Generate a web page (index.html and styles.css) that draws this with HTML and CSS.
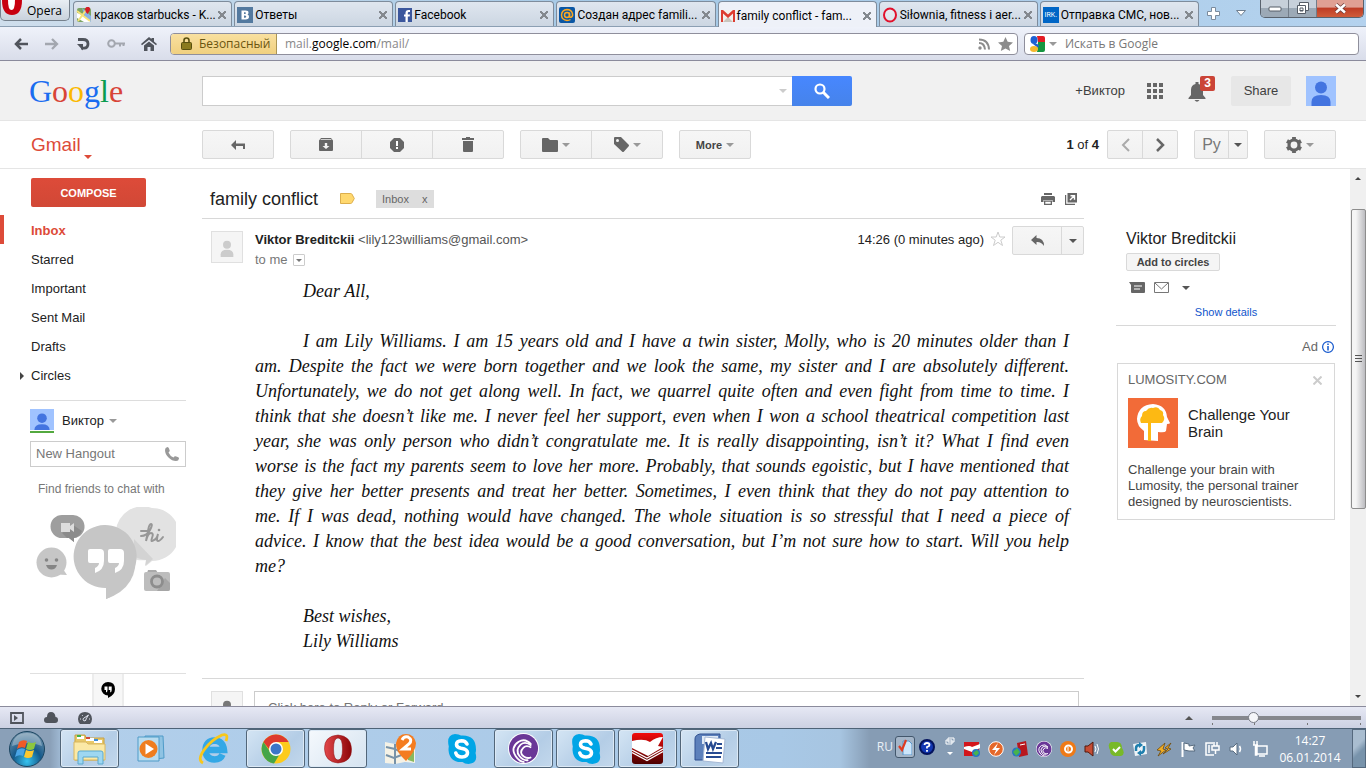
FILE: index.html
```html
<!DOCTYPE html>
<html lang="en">
<head>
  <meta charset="UTF-8">
  <title>family conflict - Gmail</title>
  <meta name="viewport" content="width=device-width, initial-scale=1.0">
  <link rel="stylesheet" href="styles.css">
</head>
<body>
  <!-- shared shapes -->
  <svg class="defs" width="0" height="0">
    <defs>
      <symbol id="person" viewBox="0 0 30 30"><circle cx="15" cy="11.500" r="6"/><path d="M5.500 30v-4q0-7 9.500-7t9.500 7v4z"/></symbol>
      <symbol id="skype" viewBox="0 0 30 30">
        <path fill="#00a5e6" d="M8 0q4 0 6 1.500 15-1 15 14 0 2-.5 3.500 3 10-7 11-4 0-6-2-13 1-14-12 0-2 .3-3.500Q-1 1 8 0z"/>
        <path fill="none" stroke="#fff" stroke-width="3.600" stroke-linecap="round" d="M20 10q-1.500-3.200-5.500-3.200-5 .2-5 3.600 0 2.800 4.500 3.800 6.500 1 6.500 4.600 0 4-5.500 4.200-5 0-6.200-4"/>
      </symbol>
      <symbol id="torrent" viewBox="0 0 32 32">
        <circle cx="16" cy="16" r="16" fill="#fff"/><circle cx="16" cy="16" r="15" fill="#6a3797"/>
        <g fill="none" stroke="#fff" stroke-width="1.900"><path d="M24 12Q18 5 11 9q-9 6-3 15 4 6 9 6"/><path d="M24 13q-6-5-11-1-6 6-1 12 4 5 9 4"/><path d="M24 15q-5-3-8 0-5 5 0 9 4 3 8 1"/></g>
      </symbol>
      <linearGradient id="redO" x1="0" x2="1"><stop offset="0" stop-color="#e2474a"/><stop offset="1" stop-color="#8d0508"/></linearGradient>
      <radialGradient id="orb" cx=".5" cy=".85" r=".8"><stop offset="0" stop-color="#35c3f0"/><stop offset=".5" stop-color="#155a8b"/><stop offset="1" stop-color="#6b8fa9"/></radialGradient>
      <linearGradient id="bookRed" x1="0" y1="0" x2="0" y2="1"><stop offset="0" stop-color="#f20c0c"/><stop offset="1" stop-color="#4c0000"/></linearGradient>
    </defs>
  </svg>

  <!-- browser tabs -->
  <header class="tabs">
    <button class="opera-menu"><svg width="20" height="15" viewBox="0 0 20 15"><path fill="#c8000f" d="M0 0h20q0 15-10 15T0 0z"/><path fill="#fff" d="M6 0h7q0 10-3.500 10T6 0z"/></svg>Opera</button>
    <nav class="tab-list">
      <div class="tab">
        <svg width="16" height="16" viewBox="0 0 16 16"><rect x="1" y="1" width="14" height="14" rx="2" fill="#7ca564"/><path d="M1 6l5 1 9 8H8L1 11z" fill="#fff"/><path d="M6 1l3 9 6 5V9z" fill="#8ab2e8"/><path d="M2 14L11 2M1 4l13 10" stroke="#f5e27a" stroke-width="2"/><path d="M11.500 7Q8 3 9.500 1T13 0q3 2-1.500 7z" fill="#d31d27"/></svg>
        <span>краков starbucks - K...</span><button class="tab-close" aria-label="Close tab"></button>
      </div>
      <div class="tab">
        <svg width="16" height="16" viewBox="0 0 16 16"><rect width="16" height="16" fill="#53799f"/><path fill="#fff" fill-rule="evenodd" d="M4.500 3.500h4q3.200 0 3 2.300 0 1.300-1 1.800 1.500.6 1.500 2.200 0 2.700-3.500 2.700h-4zM7 5.200V7q2 .3 2-.9T7 5.200zm0 3.300v2.300q2.300.2 2.300-1.100T7 8.500z"/></svg>
        <span>Ответы</span><button class="tab-close" aria-label="Close tab"></button>
      </div>
      <div class="tab">
        <svg width="14" height="14" viewBox="0 0 14 14"><rect width="14" height="14" fill="#3b579d"/><path fill="#fff" d="M7.500 14V8.500H6v-2h1.500V5q0-3 3-3H12v2h-1.200q-1 0-1 1v1.500H12l-.3 2H9.800V14z"/></svg>
        <span>Facebook</span><button class="tab-close" aria-label="Close tab"></button>
      </div>
      <div class="tab">
        <svg width="16" height="16" viewBox="0 0 16 16"><rect width="16" height="16" rx="2" fill="#0b57a4"/><g fill="none" stroke="#ffa81f" stroke-width="1.500"><circle cx="8" cy="8" r="2.500"/><path d="M10.500 5.500V9q0 1.500 1.500 1.300 2-1 1.500-3.500Q12.500 2.500 8 2.500 3 2.800 2.500 8q.3 5 5.500 5.500 2 0 3.500-1"/></g></svg>
        <span>Создан адрес famili...</span><button class="tab-close" aria-label="Close tab"></button>
      </div>
      <div class="tab active">
        <svg width="14" height="12" viewBox="0 0 14 12"><path fill="#f3efec" d="M0 0h14v12H0z"/><path fill="#c9c5bd" d="M2 12l5-5 5 5z"/><path fill="#dd3c30" d="M0 0h2l5 4.500L12 0h2v12h-2V3.500l-5 4.500-5-4.500V12H0z"/></svg>
        <span>family conflict - fam...</span><button class="tab-close" aria-label="Close tab"></button>
      </div>
      <div class="tab">
        <svg width="16" height="16" viewBox="0 0 16 16"><ellipse cx="8" cy="8" rx="6" ry="6.500" fill="#fff" fill-opacity=".3" stroke="#e1112c" stroke-width="2"/></svg>
        <span>Siłownia, fitness i aer...</span><button class="tab-close" aria-label="Close tab"></button>
      </div>
      <div class="tab">
        <i class="irk">IRK.</i>
        <span>Отправка СМС, нов...</span><button class="tab-close" aria-label="Close tab"></button>
      </div>
    </nav>
    <button class="plain new-tab" aria-label="New tab"><svg width="13" height="13" viewBox="0 0 13 13"><path d="M4.500.5h4v4h4v4h-4v4h-4v-4h-4v-4h4z" fill="#fff" stroke="#7b8b9c"/></svg></button>
    <button class="plain" aria-label="Closed tabs"><svg width="10" height="6" viewBox="0 0 10 6"><path d="M.5.500h9L5 5.500z" fill="#fff" stroke="#6f7f90"/></svg></button>
    <div class="window-buttons">
      <button aria-label="Minimize"><svg width="14" height="6" viewBox="0 0 14 6"><rect x="1" y="1" width="12" height="4" rx="1" fill="#fff" stroke="#555c66"/></svg></button>
      <button aria-label="Restore"><svg width="14" height="13" viewBox="0 0 14 13"><path fill="#fff" stroke="#555c66" d="M3.500.5h9v8h-9z"/><path fill="#fff" fill-rule="evenodd" stroke="#555c66" d="M1.500 3.500h8v8h-8zm2.500 2.500v3h3V6z"/></svg></button>
      <button class="close" aria-label="Close"><svg width="13" height="11" viewBox="0 0 13 11"><path d="M2 1.500l9 8M11 1.500l-9 8" stroke="#6d3c3a" stroke-width="4"/><path d="M2 1.500l9 8M11 1.500l-9 8" stroke="#fff" stroke-width="2.500"/></svg></button>
    </div>
  </header>

  <!-- address bar -->
  <div class="address-bar">
    <button class="plain" aria-label="Back"><svg width="14" height="12" viewBox="0 0 14 12"><path d="M7 1L2 6l5 5M2 6h12" fill="none" stroke="#50545c" stroke-width="2.500"/></svg></button>
    <button class="plain" aria-label="Forward"><svg width="14" height="12" viewBox="0 0 14 12"><path d="M7 1l5 5-5 5M12 6H0" fill="none" stroke="#a3a7af" stroke-width="2.300"/></svg></button>
    <button class="plain" aria-label="Reload"><svg width="14" height="14" viewBox="0 0 14 14"><path d="M2 2.500h5q5 0 5 4.300T8 11.200H5" fill="none" stroke="#50545c" stroke-width="2.800"/><path d="M1 7h6v6.500z" fill="#50545c"/></svg></button>
    <button class="plain" aria-label="Password"><svg width="18" height="9" viewBox="0 0 18 9"><circle cx="4.500" cy="4.500" r="3.300" fill="none" stroke="#a3a7af" stroke-width="2"/><path d="M8 4.500h10M13 4v3.500M16.500 4v3" stroke="#a3a7af" stroke-width="2"/></svg></button>
    <button class="plain" aria-label="Home"><svg width="16" height="14" viewBox="0 0 16 14"><path d="M8 0l2.500 2V1h2.500v3.500L16 7l-1 1.200-7-5.500-7 5.500L0 7zM8 4.500l5 4V14h-3.500v-4h-3v4H3V8.500z" fill="#50545c"/></svg></button>
    <div class="url-box">
      <button class="secure"><svg width="11" height="13" viewBox="0 0 11 13"><path d="M3 6V3.500Q3 1 5.500 1T8 3.500V6" fill="none" stroke="#59500f" stroke-width="1.600"/><rect x=".5" y="5.500" width="10" height="7" rx="1" fill="#8a7a1d" stroke="#59500f"/></svg>Безопасный</button>
      <div class="url">mail.<b>google.com</b>/mail/</div>
      <svg width="12" height="12" viewBox="0 0 12 12"><g fill="none" stroke="#8c8c8c" stroke-width="2"><path d="M1 5q5.500 0 6 6.500M1 1.500q9.500 0 10 10"/></g><circle cx="2" cy="10" r="1.700" fill="#8c8c8c"/></svg>
      <svg width="15" height="14" viewBox="0 0 15 14"><path d="M7.500 0l2.200 4.800 5.300.6-4 3.500 1.200 5.100-4.700-2.600L2.800 14 4 8.900 0 5.400l5.300-.6z" fill="#8c8c8c"/></svg>
    </div>
    <div class="web-search">
      <svg width="16" height="16" viewBox="0 0 16 16"><path fill="#fff" d="M0 0h16v16H0z"/><path fill="#e31b23" d="M8 0h6q2 0 2 2v4H9z"/><path fill="#159540" d="M9 6h7v8q0 2-2 2H8z"/><ellipse cx="5" cy="4" rx="3.500" ry="4" fill="#1d60d2"/><path fill="#1d60d2" d="M6 7l4 2-1 3-5-4z"/><ellipse cx="5" cy="13" rx="4" ry="3" fill="#f4b82d"/></svg>
      <i class="caret grey"></i>
      <input type="text" placeholder="Искать в Google" aria-label="Искать в Google">
    </div>
  </div>

  <div class="page">
    <!-- google bar -->
    <div class="gbar">
      <a class="logo" href="#"><span class="b">G</span><span class="r">o</span><span class="y">o</span><span class="b">g</span><span class="g">l</span><span class="r">e</span></a>
      <form class="search">
        <div class="search-field"><input type="text" aria-label="Search mail"><i class="caret light"></i></div>
        <button type="button" aria-label="Search"><svg width="16" height="16" viewBox="0 0 16 16"><circle cx="6" cy="6" r="4.500" fill="none" stroke="#fff" stroke-width="2.200"/><path d="M9 9l6 6" stroke="#fff" stroke-width="3"/></svg></button>
      </form>
      <div class="account">
        <a class="plus-name" href="#">+Виктор</a>
        <button class="plain" aria-label="Apps"><svg width="16" height="16" viewBox="0 0 16 16" fill="#666"><path d="M0 0h4v4H0zM6 0h4v4H6zM12 0h4v4h-4zM0 6h4v4H0zM6 6h4v4H6zM12 6h4v4h-4zM0 12h4v4H0zM6 12h4v4H6zM12 12h4v4h-4z"/></svg></button>
        <button class="plain bell" aria-label="Notifications"><svg width="18" height="20" viewBox="0 0 18 20" fill="#666"><path d="M7.500 0h3v2q4.500 1 4.500 6v5l2.500 3v1H.5v-1L3 13V8q0-5 4.500-6zM6.500 18h5q-2.500 3.500-5 0z"/></svg><b>3</b></button>
        <button class="share">Share</button>
        <svg class="me" width="30" height="30"><use href="#person"/></svg>
      </div>
    </div>

    <!-- gmail toolbar -->
    <div class="toolbar">
      <a class="gmail" href="#">Gmail<i class="caret red"></i></a>
      <div class="group"><button aria-label="Back to Inbox"><svg width="14" height="10" viewBox="0 0 14 10"><path d="M5 0v3.500h9V9h-2V6H5v4L0 5z" fill="#666"/></svg></button></div>
      <div class="group">
        <button aria-label="Archive"><svg width="14" height="13" viewBox="0 0 14 13"><path fill="#666" fill-rule="evenodd" d="M2 0h10l2 2.500V12q0 1-1 1H1q-1 0-1-1V2.500zm0 1.200L1.300 2h11.400l-.7-.8zM5.800 5v3H3.500L7 11l3.500-3H8.200V5z"/></svg></button>
        <button aria-label="Report spam"><svg width="14" height="14" viewBox="0 0 14 14"><path fill="#666" d="M4 0h6l4 4v6l-4 4H4l-4-4V4z"/><path fill="#fff" d="M6 3h2v5H6zM6 9h2v2H6z"/></svg></button>
        <button aria-label="Delete"><svg width="12" height="15" viewBox="0 0 12 15"><path fill="#666" d="M4 0h4v1h4v2H0V1h4zM1 4h10v10q0 1-1 1H2q-1 0-1-1z"/></svg></button>
      </div>
      <div class="group">
        <button aria-label="Move to"><svg width="16" height="14" viewBox="0 0 16 14"><path fill="#666" d="M0 1q0-1 1-1h5l2 2h7q1 0 1 1v10q0 1-1 1H1q-1 0-1-1z"/></svg><i class="caret grey"></i></button>
        <button aria-label="Labels"><svg width="15" height="15" viewBox="0 0 15 15"><path fill="#666" fill-rule="evenodd" d="M1 0h6l7.500 7.500q1 1 0 2L10 14.500q-1 1-2 0L0 7V1q0-1 1-1zm2.500 2a1.500 1.500 0 100 3 1.500 1.500 0 000-3z"/></svg><i class="caret grey"></i></button>
      </div>
      <div class="group"><button>More<i class="caret grey"></i></button></div>
      <span class="count"><b>1</b> of <b>4</b></span>
      <div class="group narrow">
        <button aria-label="Newer"><svg width="9" height="14" viewBox="0 0 9 14"><path d="M8 1L2 7l6 6" fill="none" stroke="#aaa" stroke-width="2"/></svg></button>
        <button aria-label="Older"><svg width="9" height="14" viewBox="0 0 9 14"><path d="M1 1l6 6-6 6" fill="none" stroke="#666" stroke-width="2.500"/></svg></button>
      </div>
      <div class="group lang"><button>Ру</button><button aria-label="Input tools"><i class="caret dark"></i></button></div>
      <div class="group"><button aria-label="Settings"><svg width="16" height="16" viewBox="0 0 16 16"><circle cx="8" cy="8" r="5" fill="none" stroke="#666" stroke-width="3.200"/><path d="M8 0v3M8 13v3M1 4l3 1.700M12 10.300l3 1.700M15 4l-3 1.700M4 10.300L1 12" stroke="#666" stroke-width="3.800"/></svg><i class="caret grey"></i></button></div>
    </div>

    <div class="content">
      <aside class="side">
        <div class="folders">
          <button class="compose">COMPOSE</button>
          <a class="folder current" href="#">Inbox</a>
          <a class="folder" href="#">Starred</a>
          <a class="folder" href="#">Important</a>
          <a class="folder" href="#">Sent Mail</a>
          <a class="folder" href="#">Drafts</a>
          <a class="folder expand" href="#">Circles</a>
          <a class="folder" href="#">More</a>
        </div>
        <div class="chat">
          <div class="chat-user"><svg class="me" width="24" height="24" viewBox="0 0 24 21"><use href="#person" width="24" height="24"/></svg>Виктор<i class="caret grey"></i></div>
          <div class="hangout-input"><input type="text" placeholder="New Hangout" aria-label="New Hangout"><svg width="14" height="14" viewBox="0 0 14 14"><path d="M2.500 0q1 0 1.500 1.500l.7 2Q5 4.500 3.500 5.500q1.500 3.500 5 5 1-1.500 2-1.200l2.200.7q1.500.6 1.300 1.500-.3 2.500-3 2.500Q7 14 3.500 10.500T0 3Q0 .3 2.500 0z" fill="#999"/></svg></div>
          <p>Find friends to chat with</p>
          <svg class="bubbles" width="140" height="94" viewBox="0 0 140 94">
            <path fill="#e2e2e2" d="M116 1a27 27 0 0124 14v25a27 27 0 01-24 14l-6 5 1-6A27 27 0 11116 1z"/>
            <path fill="#d3d3d3" d="M98 32l19 20-8 7 1-6q-8-1-12-4z"/>
            <path fill="#c6c6c6" d="M70 92V81A31.500 31.500 0 1184.500 77Q81 88 70 92z"/><path fill="#c6c6c6" d="M99 44q5 36-29 48V74z"/>
            <path fill="#fff" d="M54 42h10q4 0 4 4v8q0 9-9 12v-5q4-2 4-5h-9q-2 0-2-2V44q0-2 2-2zM74 42h10q4 0 4 4v8q0 9-9 12v-5q4-2 4-5h-9q-2 0-2-2V44q0-2 2-2z"/>
            <path fill="#9e9e9e" d="M26 8h10a11.500 11.500 0 012 23v4l-5-4h-7a11.500 11.500 0 010-23z"/><path fill="#8b8b8b" d="M26 26l11-8 9 6q-3 6-8 7v4l-5-4h-2z"/><path fill="#ddd" d="M25 16h9v3l4-3v9l-4-3v3h-9z"/>
            <circle cx="15.500" cy="55.500" r="15" fill="#c6c6c6"/><path d="M27 62l4 6q-6 0-10-1z" fill="#c6c6c6"/><circle cx="10.500" cy="53" r="1.800" fill="#858585"/><circle cx="20.500" cy="53" r="1.800" fill="#858585"/><path d="M10 58h11q-1.500 4.500-5.500 4.500T10 58z" fill="#858585"/>
            <path fill="#aaa" d="M112 63h8l2 3h-11z"/><rect x="108" y="65" width="26" height="19" rx="2" fill="#bdbdbd"/><path d="M121 84l8-13 5 5v6q0 2-2 2z" fill="#a6a6a6"/><circle cx="121" cy="74.500" r="5.500" fill="#bdbdbd" stroke="#8d8d8d" stroke-width="2.800"/>
            <path d="M105 29q6 0 9-6t1-6-3 7l-2 10q2-8 5-8t1 5 2 2q3-1 4-6-2 7 0 7t5-4M105 24h7" fill="none" stroke="#979797" stroke-width="2" stroke-linecap="round"/><circle cx="123" cy="23" r="1.300" fill="#979797"/>
          </svg>
          <div class="chat-tabs"><button aria-label="Hangouts"><svg width="14" height="16" viewBox="0 0 14 16"><path d="M7 16v-2.500A6.700 6.700 0 117 0q7 .2 7 7 0 6-7 9z"/><path fill="#fff" d="M3.500 4.500h3V8q0 2-1.500 2.500V8H3.500zM7.700 4.500h3V8q0 2-1.500 2.500V8H7.700z"/></svg></button></div>
        </div>
      </aside>

      <main class="mail">
        <div class="subject">
          <h1>family conflict</h1>
          <svg width="15" height="11" viewBox="0 0 15 11"><path d="M.5.500h10.300q.7 0 1.200.8L14.300 5.500 12 9.700q-.5.800-1.200.8H.5z" fill="#ffd86e" stroke="#dcae4c"/></svg>
          <span class="label">Inbox <button aria-label="Remove label">x</button></span>
          <button class="plain print" aria-label="Print all"><svg width="14" height="12" viewBox="0 0 14 12"><path fill="#666" fill-rule="evenodd" d="M3 0h8v2H3zM1 3h12l1 1v5h-2.500V7h-9v2H0V4zM3 7.500h8V12H3zm1.300 1.300v2h5.400v-2z"/></svg></button>
          <button class="plain" aria-label="In new window"><svg width="12" height="12" viewBox="0 0 12 12"><path fill="#666" d="M2.500 0H12v9.500H2.500zM0 2h1.200v8.800H10V12H0z"/><path d="M5 7l4-4M5.500 2.700h4v4" fill="none" stroke="#fff" stroke-width="1.400"/></svg></button>
        </div>
        <article class="message">
          <div class="sender-pic"><svg width="20" height="20"><use href="#person"/></svg></div>
          <div class="message-main">
            <div class="message-head">
              <div class="from">
                <div><b>Viktor Breditckii</b> <span>&lt;lily123williams@gmail.com&gt;</span></div>
                <div class="to">to me <button aria-label="Show details"><i class="caret tiny"></i></button></div>
              </div>
              <time>14:26 (0 minutes ago)</time>
              <button class="plain" aria-label="Star"><svg width="16" height="16" viewBox="0 0 16 16"><path d="M8 1l1.800 5H15l-4.200 3.200 1.700 5.300L8 11.300l-4.500 3.200 1.700-5.300L1 6h5.200z" fill="#fff" stroke="#ccc"/></svg></button>
              <div class="group reply"><button aria-label="Reply"><svg width="13" height="11" viewBox="0 0 13 11"><path d="M5.500 0v3Q13 3 13 11 10 6.500 5.500 7v3L0 5z" fill="#666"/></svg></button><button aria-label="More"><i class="caret dark"></i></button></div>
            </div>
            <div class="letter">
              <p class="short">Dear All,</p>
              <p>I am Lily Williams. I am 15 years old and I have a twin sister, Molly, who is 20 minutes older than I<br>
              am. Despite the fact we were born together and we look the same, my sister and I are absolutely different.<br>
              Unfortunately, we do not get along well. In fact, we quarrel quite often and even fight from time to time. I<br>
              think that she doesn’t like me. I never feel her support, even when I won a school theatrical competition last<br>
              year, she was only person who didn’t congratulate me. It is really disappointing, isn’t it? What I find even<br>
              worse is the fact my parents seem to love her more. Probably, that sounds egoistic, but I have mentioned that<br>
              they give her better presents and treat her better. Sometimes, I even think that they do not pay attention to<br>
              me. If I was dead, nothing would have changed. The whole situation is so stressful that I need a piece of<br>
              advice. I know that the best idea would be a good conversation, but I’m not sure how to start. Will you help<br>
              me?</p>
              <p class="short">Best wishes,</p>
              <p class="short last">Lily Williams</p>
            </div>
          </div>
        </article>
        <div class="reply-row">
          <div class="sender-pic dark"><svg width="20" height="20"><use href="#person"/></svg></div>
          <textarea placeholder="Click here to Reply or Forward" aria-label="Reply"></textarea>
        </div>
      </main>

      <aside class="people">
        <h2>Viktor Breditckii</h2>
        <button class="circles">Add to circles</button>
        <div class="contact-icons">
          <svg width="16" height="11" viewBox="0 0 16 11"><path fill="#666" d="M0 0h15q1 0 1 1v9q0 1-1 1H3q-1 0-1-1V3z"/><path d="M5 4h8M5 7h6" stroke="#fff" stroke-width="1.200"/></svg>
          <svg width="15" height="11" viewBox="0 0 15 11"><path d="M.5.500h14v10H.5zM1 1l6.500 6L14 1" fill="#fff" stroke="#777"/></svg>
          <i class="caret dark"></i>
        </div>
        <a class="details" href="#">Show details</a>
        <div class="ad-label">Ad <svg width="12" height="12" viewBox="0 0 12 12"><circle cx="6" cy="6" r="5.400" fill="none" stroke="#15c" stroke-width="1.200"/><path d="M6 2.500V4M6 5v4.500" stroke="#15c" stroke-width="1.500"/></svg></div>
        <section class="ad">
          <div class="ad-top">LUMOSITY.COM<button aria-label="Close ad"><svg width="9" height="9" viewBox="0 0 9 9"><path d="M.5.500l8 8M8.500.500l-8 8" stroke="#ccc" stroke-width="2"/></svg></button></div>
          <div class="ad-title">
            <svg width="50" height="50" viewBox="0 0 50 50"><path fill="#f26b38" d="M0 0h50v50H0z"/><path fill="#fff" d="M16 42V33Q9 28 9 21 10 7 25 6q13 1 14 13l3 6q0 1-3 1l-1 7q-1 2-8 1v9z"/><path fill="#fdb913" d="M13 25q-2-4 1-7 0-5 4-5 3-4 7-3 5-2 7 2 4 1 3 5 3 4-1 8H23v18h-3V25z"/></svg>
            <h3>Challenge Your Brain</h3>
          </div>
          <p>Challenge your brain with<br>Lumosity, the personal trainer<br>designed by neuroscientists.</p>
        </section>
      </aside>
      <div class="scrollbar"><i class="up"></i><div class="thumb"></div><i class="down"></i></div>
    </div>
  </div>

  <!-- browser status bar -->
  <footer class="status">
    <button class="plain" aria-label="Panels"><svg width="14" height="12" viewBox="0 0 14 12"><path d="M1 1h12v10H1z" fill="none" stroke="#50545c" stroke-width="1.800"/><path d="M4 3v6l4-3z" fill="#50545c"/></svg></button>
    <button class="plain" aria-label="Opera Link"><svg width="14" height="11" viewBox="0 0 14 11"><path d="M3 11q-3 0-3-3t3-3q0-5 4-5t4.500 5Q14 5 14 8t-3 3z" fill="#50545c"/></svg></button>
    <button class="plain" aria-label="Turbo"><svg width="14" height="12" viewBox="0 0 14 12"><path d="M2 12Q0 10 0 7q.5-7 7-7t7 7q0 3-2 5z" fill="#50545c"/><path d="M10.500 3L8 7a1.500 1.500 0 11-2-1zM2 7h1M4 3l.7.800M11 7h1" stroke="#dfe2ee" fill="none"/></svg></button>
    <i class="caret-up"></i>
    <input type="range" min="20" max="300" value="94" aria-label="Zoom">
  </footer>

  <!-- windows taskbar -->
  <footer class="taskbar">
    <button class="start" aria-label="Start"><svg width="36" height="36" viewBox="0 0 36 36"><circle cx="18" cy="18" r="17.500" fill="url(#orb)" stroke="#1b4560"/><path fill="#fff" opacity=".3" d="M3 15Q5 2 18 2t15 13q-14-6-30 0z"/><path fill="#ef5a28" d="M10 11q4-3 8-1l-2 7q-4-2-8 1z"/><path fill="#8cc63e" d="M19 11q4 2 8 0l-2 7q-4 2-8 0z"/><path fill="#4aa5e6" d="M8 19q4-3 8-1l-2 7q-4-2-8 1z"/><path fill="#fdc82f" d="M17 19q4 2 8 0l-2 7q-4 2-8 0z"/></svg></button>
    <div class="apps">
      <button class="open" aria-label="Explorer"><svg width="34" height="32" viewBox="0 0 34 32"><path fill="#e8c868" stroke="#c6a146" d="M2 6V2h10l1 3h18v22H2z"/><path fill="#fff" d="M4 3h7v3H4zM13 5h8v3h-8zM21 7h8v3h-8z"/><path fill="#3eb34a" d="M4 2h4v2H4z"/><path fill="#d24a35" d="M13 4h4v2h-4z"/><path fill="#3d8ed8" d="M21 6h4v2h-4z"/><path fill="#fbe9a6" stroke="#d9b75f" d="M1 9h12l2 2h17v16H1z"/><path fill="#9ed7f1" stroke="#5ba9cf" d="M5 31V20q0-2 2-2h21q2 0 2 2v11h-5v-7H10v7z"/></svg></button>
      <button aria-label="Media Player"><svg width="30" height="28" viewBox="0 0 30 28"><path fill="#8fc3e3" stroke="#4f9bc8" d="M8 1h18l1 22-19 2z"/><path fill="#b9dcef" stroke="#4f9bc8" d="M1 2h21v24H1z"/><circle cx="11.500" cy="14" r="9" fill="#ef7d1e"/><path fill="#fff" d="M8.500 8.500v11l8.500-5.500z"/></svg></button>
      <button aria-label="Internet Explorer"><svg width="32" height="32" viewBox="0 0 32 32"><path fill="none" stroke="#33a8e6" stroke-width="6.500" d="M8 17h18q-1-9-9.500-9.500Q8 8 7.500 17q0 9 9 9.500 6 0 8-5"/><path fill="none" stroke="#f8c71b" stroke-width="2.800" d="M5 30q-6-3 1-13T24 2q7-2 4 6"/></svg></button>
      <button class="open" aria-label="Chrome"><svg width="30" height="30" viewBox="0 0 30 30"><circle cx="15" cy="15" r="14.500" fill="#fccb1c"/><path fill="#de3a2e" d="M2.400 8Q7 .5 15 .5T27.600 8H15v7H8z"/><path fill="#45a549" d="M2.400 8Q-1 14 2 21t11 8.500L20 18l-10 1z"/><circle cx="15" cy="15" r="7" fill="#fff"/><circle cx="15" cy="15" r="5.500" fill="#3b76c9"/></svg></button>
      <button class="open current" aria-label="Opera"><svg width="30" height="30" viewBox="0 0 30 30"><path fill-rule="evenodd" fill="url(#redO)" stroke="#8f0e10" stroke-width=".5" d="M15 1q13 1 13.500 14T15 29Q2 28 1.500 15T15 1zm0 3q-4.500 0-4.500 11T15 26t4.500-11T15 4z"/></svg></button>
      <button aria-label="2GIS"><svg width="32" height="32" viewBox="0 0 32 32"><path fill="#f5f2e6" d="M1 9l10 2 10-2 10 2v19l-10-1-10 2-10-1z"/><path d="M2 14l9 2 9 5M11 11v20M2 22l8 3 10-4" stroke="#7893a8" stroke-width="2" fill="none"/><path fill="#88b95e" d="M24 18h6v11l-6-2z"/><path fill="#f47c20" d="M22 28Q11 18 12 10q2-9 10-9t10 9q0 8-10 18z"/><path d="M18 7q2-4 6-3 5 3 1 7l-6 5h8" stroke="#fff" stroke-width="3" fill="none"/></svg></button>
      <button aria-label="Skype"><svg width="30" height="30"><use href="#skype"/></svg></button>
      <button class="open" aria-label="BitTorrent"><svg width="31" height="31"><use href="#torrent"/></svg></button>
      <button class="open" aria-label="Skype"><svg width="30" height="30"><use href="#skype"/></svg></button>
      <button class="open" aria-label="Reader"><svg width="31" height="31" viewBox="0 0 31 31"><rect width="31" height="31" rx="3" fill="url(#bookRed)"/><path fill="#fff" d="M0 8q12-3 18 1 6-5 13-5l-5 9 5 1-15 9L0 15z"/><path d="M0 17l15 8 16-9M0 19.500l15 8 16-9" stroke="#fff" fill="none" stroke-width="1.200"/></svg></button>
      <button class="open" aria-label="Word"><svg width="32" height="32" viewBox="0 0 32 32"><path fill="#5c80bb" stroke="#2e4f8f" d="M6 1h20v26H1V6q0-4 5-5z"/><path fill="#dfe9f6" d="M8 3h16v8H8z"/><path fill="#fff" stroke="#a5b8d5" d="M11 4l20 2-2 24-20-2z"/><path d="M12 9l2 7 3-6 2 6 3-7" stroke="#264a91" stroke-width="2.300" fill="none"/><path d="M23 11h5M22 15h6M12 20h16M12 24h15" stroke="#264a91" stroke-width="2"/></svg></button>
    </div>
    <div class="lang-bar">
      <span>RU</span>
      <button class="boxed" aria-label="Spelling"><svg width="14" height="16" viewBox="0 0 14 16"><path d="M5 2h6l3 3v11H5z" fill="#cde6fb" stroke="#5795cb"/><path d="M1 7l3 4 4-10" stroke="#dd3b22" stroke-width="2.200" fill="none"/></svg></button>
      <button class="plain" aria-label="Help"><svg width="16" height="16" viewBox="0 0 16 16"><circle cx="8" cy="8" r="7" fill="#1137b4" stroke="#04135c" stroke-width="2"/><path d="M5.500 6q0-2 2.500-2t2.500 2q0 1.300-2.500 2v1.500M8 11v1.800" stroke="#fff" stroke-width="1.800" fill="none"/></svg></button>
      <svg width="10" height="20" viewBox="0 0 10 20"><path d="M3 1h6v4H3zM1 3h6v4H1z" fill="#8a9fb7" stroke="#fff"/><path d="M2 15h6l-3 3z" fill="#fff"/></svg>
    </div>
    <div class="tray">
      <svg width="16" height="16" viewBox="0 0 16 16"><path fill="#d3151b" d="M0 1h15v14H0z"/><path fill="#fff" d="M0 6q6-2 8 0l8-3v4l-8 4-8-3z"/><circle cx="12" cy="12" r="4" fill="#2775c4"/><path d="M9 12l4-3 2 3-3 3z" fill="#47b34c"/></svg>
      <svg width="16" height="16" viewBox="0 0 16 16"><circle cx="8" cy="8" r="7.300" fill="#e5682a" stroke="#fff"/><path fill="#fff" d="M10 2L4 9h4l-2 5 6-7H8z"/></svg>
      <svg width="16" height="16" viewBox="0 0 16 16"><path fill="#b8161d" d="M5 2l9-2 2 14-9 2z"/><path d="M8 4l5-1" stroke="#fff"/><circle cx="4.500" cy="11" r="4.500" fill="#2775c4"/><path d="M1 11l4-4 3 4-4 4z" fill="#47b34c"/></svg>
      <svg width="16" height="16"><use href="#torrent"/></svg>
      <svg width="16" height="16" viewBox="0 0 16 16"><circle cx="8" cy="8" r="8" fill="#ef7a17"/><circle cx="8.500" cy="8" r="3.500" fill="none" stroke="#fff" stroke-width="2"/><path d="M8 6v4" stroke="#fff"/></svg>
      <svg width="16" height="16" viewBox="0 0 16 16"><path fill="#c64c34" stroke="#53190d" d="M1 5h3l5-4v14l-5-4H1z"/><path d="M11 5q2 3 0 6M13 3q3 5 0 10" stroke="#fff" fill="none"/></svg>
      <svg width="16" height="16" viewBox="0 0 16 16"><path fill="#78b928" d="M3 1h6q5 0 5 6 4 6-1 8H8Q2 15 2 9-1 3 3 1z"/><path d="M5 8l2.500 2.500L12 6" stroke="#fff" stroke-width="2" fill="none"/></svg>
      <svg width="16" height="16" viewBox="0 0 16 16"><path fill="#eef3f7" d="M1 3l13-2 1 12-12 2z"/><path d="M4 10V7q0-3 4-3M12 5v3q0 4-4 4" stroke="#207fae" stroke-width="2.500" fill="none"/><path d="M7 1l4 3-4 3zM9 9v6l-4-3z" fill="#207fae"/></svg>
      <svg width="16" height="16" viewBox="0 0 16 16"><path d="M9 2L1 9l4 1-3 5 8-6-3-1zM15 2L9 7l3 1-5 5 8-5-3-1z" fill="#f0ad25" stroke="#6c4a10" stroke-width=".8"/></svg>
      <svg width="16" height="16" viewBox="0 0 16 16"><path d="M2.500 1v15" stroke="#fff" stroke-width="2"/><path fill="#fff" stroke="#596c80" d="M4 2l5 1v2l6-1-2 3 2 3H9l-5-1z"/></svg>
      <svg width="16" height="16" viewBox="0 0 16 16"><path d="M9 2H2v12h8M5 4v8M10 1v4M13 1v4M8 5h7v4h-7zM11.500 9v4" stroke="#fff" stroke-width="1.500" fill="none"/></svg>
      <svg width="16" height="16" viewBox="0 0 16 16"><path fill="#fff" stroke="#596c80" d="M2 6h3l4-4v12l-4-4H2z"/><path d="M11.500 5q2 3 0 6" stroke="#fff" stroke-width="1.500" fill="none"/></svg>
      <svg width="16" height="16" viewBox="0 0 16 16"><path d="M5 5h10v8H5zM7 15h6M2 0v4M5 0v4M1 4h5M3.500 4v10h2" stroke="#fff" stroke-width="1.500" fill="none"/></svg>
    </div>
    <div class="clock">14:27<br>06.01.2014</div>
    <button class="show-desktop" aria-label="Show desktop"></button>
  </footer>
</body>
</html>
```
FILE: styles.css
```css
* { box-sizing: border-box; }
html, body {
  height: 100%;
  margin: 0;
}
body {
  display: flex;
  flex-direction: column;
  overflow: hidden;
  font: 13px/16px "Liberation Sans", Arial, sans-serif;
  color: #222;
  background: #fff;
}
button, input, textarea {
  font: inherit;
  color: inherit;
  margin: 0;
  padding: 0;
  border: 0;
  outline: 0;
}
button { cursor: pointer; }
a { color: inherit; text-decoration: none; }
svg { flex: none; display: block; }
h1, h2, h3, p { margin: 0; font-weight: normal; }
.defs { position: absolute; }
.plain {
  display: flex;
  align-items: center;
  justify-content: center;
  background: none;
}

/* small triangles */
.caret {
  flex: none;
  border: 4px solid transparent;
  border-top-color: #777;
  border-bottom: 0;
}
.caret.light { border-top-color: #ccc; }
.caret.grey { border-top-color: #999; margin-left: 4px; }
.caret.dark { border-top-color: #555; }
.caret.red { border-top-color: #dd4b39; }
.caret.tiny { border-width: 3px 3px 0; }
.caret-up {
  border: 4px solid transparent;
  border-top: 0;
  border-bottom-color: #555;
}

/* browser chrome */
.tabs, .address-bar, .status, .taskbar {
  flex: none;
  display: flex;
  align-items: center;
  font-family: "Open Sans", "Segoe UI", sans-serif;
  font-size: 12px;
}
.tabs {
  height: 27px;
  align-items: stretch;
  background: linear-gradient(90deg, #cfdeec 0, #a5c9e6 600px, #b4d2ee 100%);
  border-bottom: 1px solid #8c9fb3;
  color: #000;
}
.opera-menu {
  display: flex;
  gap: 5px;
  width: 70px;
  height: 21px;
  margin-right: 3px;
  padding-left: 1px;
  line-height: 21px;
  background: linear-gradient(#e8eef4, #c9d2dc);
  border: 1px solid #76818d;
  border-top: 0;
  border-radius: 0 0 5px 5px;
}
.tab-list {
  display: flex;
  gap: 2px;
  flex: 0 1 1126px;
  font-family: Roboto, "Segoe UI", sans-serif;
}
.tab {
  flex: 1 1 0;
  min-width: 0;
  display: flex;
  align-items: center;
  gap: 2px;
  margin-top: 1px;
  padding: 2px 5px 0 2px;
  background: linear-gradient(#dfe6ef, #ccd6e2);
  border: 1px solid #7e8c9c;
  border-bottom: 0;
  border-radius: 4px 4px 0 0;
}
.tab.active {
  background: #eef1f8;
  margin-bottom: -1px;
}
.tab span {
  flex: 1;
  white-space: nowrap;
}
.tab-close {
  flex: none;
  width: 8px;
  height: 8px;
  background: linear-gradient(45deg, transparent 40%, #84898f 40% 60%, transparent 60%), linear-gradient(-45deg, transparent 40%, #84898f 40% 60%, transparent 60%);
}
.irk {
  flex: none;
  width: 16px;
  font: 7px/16px Roboto, sans-serif;
  text-align: center;
  color: #fff;
  background: #0066c6;
}
.new-tab { width: 29px; }
.tabs > .plain:not(.new-tab) { width: 26px; }
.window-buttons {
  display: flex;
  height: 18px;
  margin-left: auto;
  margin-right: 2px;
  border: 1px solid #59626d;
  border-top: 0;
  border-radius: 0 0 5px 5px;
  overflow: hidden;
}
.window-buttons button {
  display: flex;
  align-items: center;
  justify-content: center;
  width: 28px;
  background: linear-gradient(#c7d0da 50%, #9ca9b6 50%);
  border-right: 1px solid #737d89;
}
.window-buttons .close {
  width: 46px;
  border: 0;
  background: linear-gradient(#e0a093 40%, #bf3e26 50%, #d05c3a);
}
.address-bar {
  height: 34px;
  padding: 0 7px 0 14px;
  background: linear-gradient(#eff2fa, #d9ddea);
  border-bottom: 1px solid #8b8b9c;
}
.address-bar > .plain { width: 14px; margin-right: 17px; }
.address-bar > .plain:nth-of-type(4) { width: 18px; margin-right: 16px; }
.address-bar > .plain:nth-of-type(5) { width: 16px; margin-right: 13px; }
.url-box, .web-search {
  display: flex;
  align-items: center;
  height: 22px;
  background: #fff;
  border: 1px solid #8f8f9c;
  border-radius: 4px;
}
.url-box {
  flex: 1;
  gap: 8px;
  padding-right: 4px;
}
.secure {
  display: flex;
  align-items: center;
  gap: 7px;
  width: 106px;
  height: 20px;
  padding-left: 10px;
  color: #6b5510;
  background: linear-gradient(#f9e0a0, #f0d080);
  border-right: 1px solid #ab9555;
  border-radius: 3px 0 0 3px;
}
.url { flex: 1; color: #888; }
.url b { font-weight: normal; color: #000; }
.web-search {
  width: 335px;
  margin-left: 6px;
  padding-left: 4px;
}
.web-search .caret { margin-right: 8px; }
.web-search input { flex: 1; min-width: 0; background: none; }
input::placeholder { color: #777; opacity: 1; }

/* google bar */
.page {
  flex: 1;
  min-height: 0;
  display: flex;
  flex-direction: column;
}
.gbar {
  flex: none;
  display: flex;
  align-items: center;
  height: 60px;
  padding-right: 30px;
  background: #f1f1f1;
  border-bottom: 1px solid #e5e5e5;
}
.logo {
  flex: none;
  width: 202px;
  padding-left: 29px;
  font: 32px/36px "Liberation Serif", serif;
}
.logo .b { color: #1a6cf0; }
.logo .r { color: #d84437; }
.logo .y { color: #fbb900; }
.logo .g { color: #0a9b4e; }
.search {
  flex: 0 1 650px;
  display: flex;
  height: 30px;
}
.search-field {
  flex: 1;
  display: flex;
  align-items: center;
  padding-right: 5px;
  background: #fff;
  border: 1px solid #ccc;
  border-right: 0;
}
.search-field input { flex: 1; height: 28px; padding: 0 8px; }
.search > button {
  display: flex;
  align-items: center;
  justify-content: center;
  width: 60px;
  background: linear-gradient(#4787ff, #4683ea);
  border-radius: 0 2px 2px 0;
}
.account {
  display: flex;
  align-items: center;
  margin-left: auto;
  color: #404040;
}
.plus-name { margin-right: 22px; }
.bell {
  position: relative;
  margin: 0 25px;
  padding-top: 2px;
}
.bell b {
  position: absolute;
  left: 12px;
  top: -4px;
  width: 15px;
  font-size: 12px;
  line-height: 15px;
  color: #fff;
  background: #cb4437;
  border-radius: 2px;
}
.share {
  width: 60px;
  height: 30px;
  margin-right: 15px;
  background: #e7e7e7;
  border-radius: 2px;
}
.me { background: #a0c3ff; fill: #4374e0; }

/* toolbar */
.toolbar {
  flex: none;
  display: flex;
  align-items: center;
  height: 48px;
  padding-right: 30px;
  border-bottom: 1px solid #e5e5e5;
}
.gmail {
  flex: none;
  display: flex;
  align-items: center;
  gap: 3px;
  width: 202px;
  padding-left: 31px;
  font-size: 19px;
  line-height: 24px;
  color: #dd4b39;
}
.gmail .caret { margin-top: 24px; }
.group {
  flex: none;
  display: flex;
  height: 29px;
  margin-right: 16px;
  border: 1px solid #d9d9d9;
  border-radius: 2px;
  background: linear-gradient(#f6f6f6, #f1f1f1);
}
.group button {
  display: flex;
  align-items: center;
  justify-content: center;
  width: 70px;
  background: none;
  font-size: 11px;
  font-weight: bold;
  color: #444;
}
.group button + button {
  width: 71px;
  border-left: 1px solid #d9d9d9;
}
.count { margin-left: auto; margin-right: 8px; }
.group.narrow button { width: 34px; }
.group.narrow button + button { width: 35px; }
.group.lang button {
  width: 33px;
  font-size: 16px;
  font-weight: normal;
  color: #777;
}
.group.lang button + button { width: 19px; }
.toolbar .group:last-child { margin-right: 0; }

/* three columns */
.content {
  flex: 1;
  min-height: 0;
  display: flex;
}
.side {
  flex: none;
  display: flex;
  flex-direction: column;
  width: 202px;
}
.folders {
  height: 231px;
  padding-top: 9px;
  overflow: hidden;
}
.compose {
  display: block;
  width: 115px;
  height: 29px;
  margin: 0 0 8px 31px;
  font-size: 11px;
  font-weight: bold;
  color: #fff;
  background: linear-gradient(#dd4b39, #d14836);
  border-radius: 2px;
}
.folder {
  display: block;
  height: 29px;
  padding-left: 31px;
  line-height: 31px;
}
.folder.current {
  padding-left: 27px;
  border-left: 4px solid #dd4b39;
  color: #dd4b39;
  font-weight: bold;
}
.folder.expand { padding-left: 20px; }
.folder.expand::before {
  content: "";
  display: inline-block;
  margin-right: 7px;
  border: 4px solid transparent;
  border-left-color: #444;
  border-right: 0;
}
.chat {
  flex: 1;
  display: flex;
  flex-direction: column;
  margin: 0 16px 0 30px;
  border-top: 1px solid #ddd;
}
.chat-user {
  display: flex;
  align-items: center;
  margin: 8px 0 8px;
}
.chat-user .me {
  height: 24px;
  margin-right: 8px;
  padding-bottom: 1px;
  background-clip: content-box;
  border-bottom: 2px solid #53a93f;
}
.chat-user .caret { margin-left: 5px; }
.hangout-input {
  display: flex;
  align-items: center;
  height: 26px;
  padding: 0 6px 0 5px;
  border: 1px solid #ccc;
}
.hangout-input input { flex: 1; min-width: 0; }
.chat p {
  margin: 14px 0 10px 8px;
  font-size: 12px;
  color: #777;
  white-space: nowrap;
}
.bubbles { margin-left: 6px; }
.chat-tabs {
  display: flex;
  justify-content: center;
  margin-top: auto;
  border-top: 1px solid #e0e0e0;
}
.chat-tabs button {
  display: flex;
  align-items: center;
  justify-content: center;
  width: 32px;
  height: 32px;
  background: #f7f7f7;
  border: 2px solid #ececec;
  border-width: 0 2px;
}

/* message */
.mail {
  flex: 1;
  min-width: 0;
  display: flex;
  flex-direction: column;
  overflow: hidden;
}
.subject {
  flex: none;
  display: flex;
  align-items: center;
  height: 50px;
  padding: 10px 7px 0 8px;
  border-bottom: 1px solid #d8d8d8;
}
.subject h1 {
  margin-right: 22px;
  font-size: 18px;
  line-height: 22px;
}
.label {
  height: 18px;
  margin-left: 21px;
  padding: 0 6px;
  font-size: 11px;
  line-height: 18px;
  color: #666;
  background: #ddd;
}
.label button { margin-left: 10px; background: none; }
.print { margin-left: auto; margin-right: 10px; }
.message {
  flex: none;
  display: flex;
  gap: 12px;
  height: 460px;
  padding-left: 9px;
  border-bottom: 1px solid #d8d8d8;
}
.sender-pic {
  flex: none;
  display: flex;
  align-items: center;
  justify-content: center;
  width: 32px;
  height: 32px;
  margin-top: 12px;
  background: #f5f5f5;
  border: 1px solid #e0e0e0;
  fill: #ccc;
}
.sender-pic.dark { margin-top: 0; fill: #777; }
.message-main { flex: 1; min-width: 0; }
.message-head {
  display: flex;
  align-items: flex-start;
  height: 60px;
  padding-top: 7px;
}
.from { flex: 1; padding-top: 6px; }
.from span { color: #555; }
.to {
  display: flex;
  align-items: center;
  gap: 5px;
  height: 16px;
  margin-top: 4px;
  color: #777;
}
.to button {
  display: flex;
  align-items: center;
  justify-content: center;
  width: 12px;
  height: 12px;
  background: #fff;
  border: 1px solid #ccc;
  border-radius: 1px;
}
.message-head time { padding-top: 6px; }
.message-head .plain { margin: 5px 6px 0; }
.group.reply { margin: 0; }
.group.reply button { width: 48px; }
.group.reply button + button { width: 22px; }
.letter {
  margin-right: 15px;
  font: italic 18px/25px "Monotype Corsiva", "Liberation Serif", serif;
  color: #111;
}
.letter p {
  margin: 0 0 25px;
  text-indent: 48px;
  text-align: justify;
  text-align-last: justify;
}
.letter p.short { text-align-last: left; }
.letter p.last { margin-top: -25px; }
.reply-row {
  flex: none;
  display: flex;
  gap: 11px;
  padding: 12px 5px 0 9px;
}
.reply-row textarea {
  flex: 1;
  height: 60px;
  padding: 8px 13px;
  border: 1px solid #ccc;
  resize: none;
}

/* contact and ad */
.people {
  flex: none;
  width: 266px;
  padding: 59px 14px 0 32px;
}
.people h2 {
  margin-left: 10px;
  font-size: 16px;
  line-height: 22px;
}
.circles {
  display: block;
  width: 94px;
  height: 18px;
  margin: 3px 0 0 10px;
  font-size: 11px;
  font-weight: bold;
  color: #444;
  background: #f5f5f5;
  border: 1px solid #d9d9d9;
  border-radius: 2px;
}
.contact-icons {
  display: flex;
  align-items: center;
  gap: 9px;
  margin: 11px 0 11px 13px;
}
.contact-icons .caret { margin-left: 4px; }
.details {
  display: block;
  padding-bottom: 5px;
  font-size: 11px;
  text-align: center;
  color: #15c;
  border-bottom: 1px solid #d8d8d8;
}
.ad-label {
  display: flex;
  align-items: center;
  justify-content: flex-end;
  gap: 4px;
  margin: 13px 2px 8px 0;
  color: #666;
}
.ad {
  height: 157px;
  margin: 0 1px;
  padding: 8px 10px;
  border: 1px solid #d8d8d8;
}
.ad-top {
  display: flex;
  align-items: center;
  justify-content: space-between;
  margin-right: 2px;
  color: #666;
}
.ad-top button { background: none; }
.ad-title {
  display: flex;
  align-items: center;
  gap: 10px;
  margin: 10px 0 14px;
}
.ad h3 {
  width: 110px;
  font-size: 15px;
  line-height: 17px;
}
.ad p { color: #444; white-space: nowrap; }
.scrollbar {
  flex: none;
  display: flex;
  flex-direction: column;
  align-items: center;
  width: 16px;
  padding: 8px 0;
  background: #f0f0f0;
}
.scrollbar .up, .scrollbar .down {
  border: 3px solid transparent;
  border-top: 0;
  border-bottom-color: #444;
}
.scrollbar .down {
  margin-top: auto;
  border-top: 3px solid #444;
  border-bottom: 0;
}
.thumb {
  width: 15px;
  height: 300px;
  margin-top: 29px;
  border: 1px solid #8d8d8d;
  border-radius: 2px;
  background:
    repeating-linear-gradient(#555 0 1px, transparent 1px 3px) 3px 50% / 7px 9px no-repeat,
    linear-gradient(90deg, #f5f5f5 30%, #bcbcc0);
}

/* status bar */
.status {
  height: 22px;
  padding: 0 5px 0 10px;
  background: linear-gradient(#e6e8f4, #ccd1e2);
  border-top: 1px solid #8b8b9c;
}
.status .plain { margin-right: 20px; }
.caret-up { margin-left: auto; margin-right: 19px; }
.status input {
  appearance: none;
  width: 149px;
  height: 14px;
  background:
    linear-gradient(#777, #777) 0 100% / 1px 2px no-repeat,
    linear-gradient(#777, #777) 42px 100% / 1px 2px no-repeat,
    linear-gradient(#777, #777) 95px 100% / 1px 2px no-repeat,
    linear-gradient(#777, #777) 100% 100% / 1px 2px no-repeat,
    linear-gradient(#85878d, #85878d) 0 50% / 100% 4px no-repeat;
}
.status input::-webkit-slider-thumb {
  appearance: none;
  width: 11px;
  height: 11px;
  background: #f4f5f9;
  border: 1px solid #777b85;
  border-radius: 50%;
}

/* taskbar */
.taskbar {
  height: 40px;
  background: linear-gradient(90deg, #8aa0b8 0, #8aa0b8 50px, #b2cfeb 70px, #a8c8e6 780px, #a7c5e1 840px, #869cb4 870px, #869cb4);
  border-top: 1px solid #4e6377;
}
.start {
  width: 60px;
  padding-left: 9px;
  background: none;
}
.apps { display: flex; gap: 3px; }
.apps button {
  display: flex;
  align-items: center;
  justify-content: center;
  width: 59px;
  height: 39px;
  background: none;
  border-radius: 3px;
}
.apps .open {
  background: linear-gradient(135deg, #d4e5f4, #b4cde6 60%, #c3d8ec);
  border: 1px solid #526679;
  box-shadow: inset 0 0 0 1px #dce9f5;
}
.apps .current { background: linear-gradient(135deg, #f5f9fd, #d5e3f0); }
.lang-bar {
  display: flex;
  align-items: center;
  gap: 4px;
  margin-left: auto;
  margin-bottom: 4px;
  color: #e9eff6;
}
.lang-bar span { margin-right: -2px; }
.lang-bar > svg { margin-left: 6px; }
.boxed {
  display: flex;
  align-items: center;
  justify-content: center;
  width: 20px;
  height: 22px;
  background: #a4b5c8;
  border: 1px solid #43576c;
  border-radius: 3px;
}
.tray {
  display: flex;
  gap: 8px;
  margin-left: 9px;
}
.clock {
  width: 84px;
  text-align: center;
  line-height: 17px;
  color: #fff;
}
.show-desktop {
  width: 14px;
  height: 39px;
  background: linear-gradient(135deg, #a9bdd0 40%, #7893ab 60%);
  border: 1px solid #55697e;
}
```
